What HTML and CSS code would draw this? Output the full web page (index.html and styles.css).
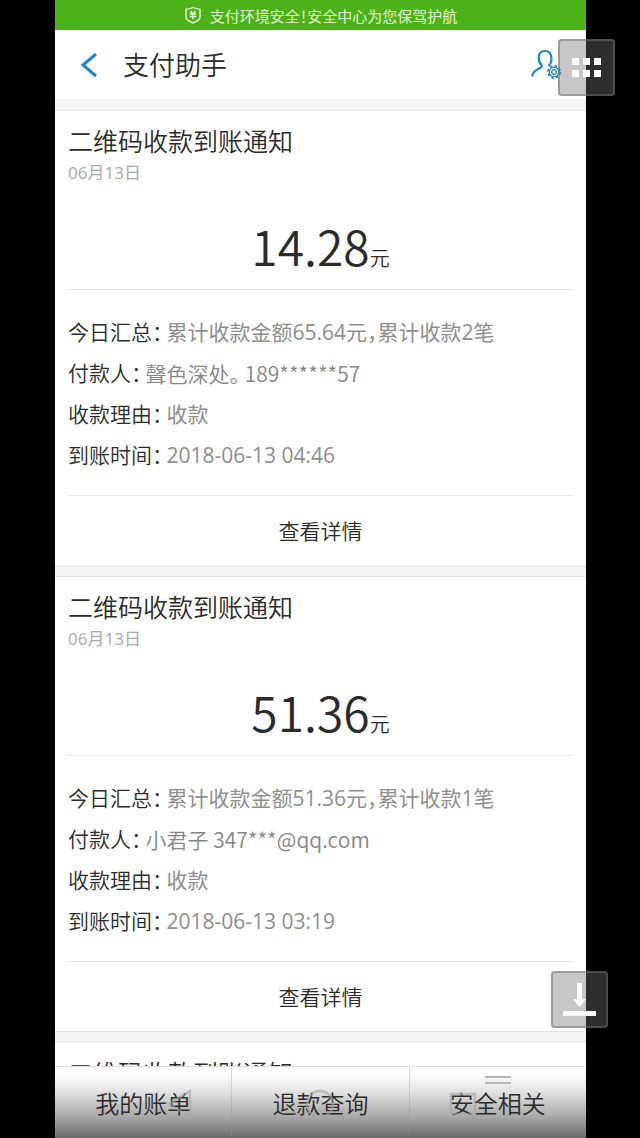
FILE: index.html
```
<!DOCTYPE html>
<html lang="zh-CN">

<head>
  <meta charset="utf-8">
  <meta name="viewport" content="width=device-width, initial-scale=1">
  <title>支付助手</title>
  <link rel="stylesheet" href="styles.css">
</head>

<body>
  <div class="phone">
    <div class="safe-bar">
      <svg class="shield" viewBox="0 0 18 18" aria-hidden="true">
        <path d="M9 1.2 L11 2.4 L16 3.4 V10.5 Q16 13.6 13 15 L9 17 L5 15 Q2 13.6 2 10.5 V3.4 L7 2.4 Z" />
        <path d="M6.500 5.200 L9 8 L11.500 5.200 M5.800 8 H12.200 M5.800 10.500 H12.200 M9 8 V13.300" />
      </svg>
      <span>支付环境安全！安全中心为您保驾护航</span>
    </div>

    <header class="top">
      <button class="icon-btn" type="button" aria-label="返回">
        <svg class="back" viewBox="0 0 18 26" aria-hidden="true">
          <path d="M16 2 L3 13 L16 24" />
        </svg>
      </button>
      <h1>支付助手</h1>
      <button class="icon-btn" type="button" aria-label="账户设置">
        <svg class="user" viewBox="0 0 32 32" aria-hidden="true">
          <path class="person" d="M18.500 17 C21 14.500 21.800 11 21.300 8 C20.800 4 18.500 2 15 2 C11.500 2 9 4 8.700 8 C8.500 11.500 9.500 14 11.500 16.300 C12.500 17.800 11 18.500 8.500 19.700 C4.500 21.500 2.500 23.500 2.300 27.500" />
          <circle class="gear" cx="24" cy="23" r="4.800" />
          <circle class="teeth" cx="24" cy="23" r="6" />
          <circle class="gear" cx="24" cy="23" r="2.300" />
        </svg>
      </button>
    </header>

    <main>
      <article class="card">
        <h2>二维码收款到账通知</h2>
        <p class="date">06月13日</p>
        <p class="amount">14.28<span class="unit">元</span></p>
        <dl>
          <div class="row"><dt>今日汇总：</dt><dd>累计收款金额65.64元，累计收款2笔</dd></div>
          <div class="row"><dt>付款人：</dt><dd class="payer">聲色深处。 189******57</dd></div>
          <div class="row"><dt>收款理由：</dt><dd>收款</dd></div>
          <div class="row"><dt>到账时间：</dt><dd>2018-06-13 04:46</dd></div>
        </dl>
        <a class="detail" href="#">查看详情</a>
      </article>

      <article class="card">
        <h2>二维码收款到账通知</h2>
        <p class="date">06月13日</p>
        <p class="amount">51.36<span class="unit">元</span></p>
        <dl>
          <div class="row"><dt>今日汇总：</dt><dd>累计收款金额51.36元，累计收款1笔</dd></div>
          <div class="row"><dt>付款人：</dt><dd class="payer">小君子 347***@qq.com</dd></div>
          <div class="row"><dt>收款理由：</dt><dd>收款</dd></div>
          <div class="row"><dt>到账时间：</dt><dd>2018-06-13 03:19</dd></div>
        </dl>
        <a class="detail" href="#">查看详情</a>
      </article>

      <article class="card">
        <h2>二维码收款到账通知</h2>
      </article>
    </main>

    <nav class="tabs">
      <button type="button">我的账单
        <svg class="key key-back" viewBox="0 0 30 32" aria-hidden="true"><path d="M25 3 V29 L4 16 Z" /></svg>
      </button>
      <button type="button">退款查询
        <svg class="key key-home" viewBox="0 0 30 32" aria-hidden="true"><circle cx="15" cy="16" r="13" /></svg>
      </button>
      <button type="button">安全相关
        <svg class="key key-recent" viewBox="0 0 30 32" aria-hidden="true"><path d="M3 6 H27 V26 H3 Z" /></svg>
        <span class="handle"></span>
      </button>
    </nav>
  </div>

  <button class="float float-menu" type="button" aria-label="菜单">
    <svg viewBox="0 0 57 57" aria-hidden="true">
      <path d="M14 19h7v7h-7z M25 19h7v7h-7z M36 19h7v7h-7z M14 31h7v7h-7z M25 31h7v7h-7z M36 31h7v7h-7z" />
    </svg>
  </button>
  <button class="float float-save" type="button" aria-label="下载">
    <svg viewBox="0 0 57 57" aria-hidden="true">
      <path d="M26 12h5v16h4l-6.500 8l-6.500 -8h4z M12 40h33v5h-33z" />
    </svg>
  </button>
</body>

</html>
```
FILE: styles.css
```
* {
  box-sizing: border-box;
}

body {
  font-family: "Open Sans", "Noto Sans CJK SC", sans-serif;
  font-weight: 350;
  margin: 0;
  background-color: #000;
  color: #2b2b2b;
  position: relative;
  height: 100vh;
  overflow: hidden;
}

h1, h2, p, dl, dd {
  margin: 0;
  font-weight: inherit;
}

button {
  font: inherit;
  color: inherit;
  border: 0;
  padding: 0;
  background: none;
}

.phone {
  display: flex;
  flex-direction: column;
  height: 100%;
  margin: 0 54px 0 55px;
  background-color: #f4f4f4;
}

/* green notice on top */
.safe-bar {
  display: flex;
  flex: none;
  align-items: center;
  justify-content: center;
  gap: 8px;
  height: 30px;
  background-color: #4db11a;
  color: #e4f6d6;
  font-size: 15px;
  font-weight: 400;
  font-feature-settings: "halt";
}

.shield {
  width: 18px;
  height: 18px;
  fill: none;
  stroke: #e4f6d6;
  stroke-width: 1.4;
}

.top {
  display: flex;
  flex: none;
  align-items: center;
  height: 70px;
  padding: 0 24px;
  background-color: #fff;
  border-bottom: 1px solid #efefef;
}

.top h1 {
  flex: 1;
  margin-left: 24px;
  font-size: 26px;
  line-height: 38px;
}

.icon-btn {
  display: flex;
}

.icon-btn svg {
  fill: none;
  stroke: #1c86c8;
}

.back {
  width: 20px;
  height: 26px;
  stroke-width: 3;
}

.user {
  width: 32px;
  height: 32px;
}

.person {
  stroke-width: 2.2;
}

.gear {
  stroke-width: 1.3;
}

.teeth {
  stroke-width: 2;
  stroke-dasharray: 2.4 2.312;
}

/* message list */
main {
  flex: 1;
  min-height: 0;
  overflow: hidden;
  padding-top: 10px;
}

.card {
  margin-bottom: 10px;
  padding: 12px 13px 0;
  background-color: #fff;
  border-top: 1px solid #e6e6e6;
  border-bottom: 1px solid #e6e6e6;
}

.card h2 {
  font-size: 25px;
  line-height: 36px;
}

.date {
  font-size: 17px;
  font-weight: 400;
  line-height: 28px;
  color: #a9a9a9;
}

.amount {
  height: 103px;
  font-family: "Noto Sans CJK SC", sans-serif;
  font-size: 48px;
  line-height: 116px;
  text-align: center;
  border-bottom: 1px solid #e8e8e8;
}

.unit {
  font-size: 20px;
}

dl {
  padding: 22px 0 19px;
}

.row {
  display: flex;
  gap: 4px;
  font-size: 21px;
  line-height: 41px;
  font-feature-settings: "halt";
}

dd {
  font-weight: 400;
  color: #8e8e8e;
}

.payer {
  font-family: "Noto Sans CJK SC", sans-serif;
  font-weight: 350;
  color: #858585;
}

.detail {
  display: block;
  font-size: 21px;
  line-height: 70px;
  text-align: center;
  color: inherit;
  text-decoration: none;
  height: 70px;
  border-top: 1px solid #e8e8e8;
}

/* bottom menu with the system keys showing through */
.tabs {
  display: flex;
  flex: none;
  height: 72px;
  border-top: 1px solid #dcdcdc;
  background: linear-gradient(#fff 8%, #e2e2e2 35%, #a8a8a8 70%, #696969);
}

.tabs button {
  position: relative;
  flex: 1;
  font-size: 24px;
}

.tabs button + button {
  border-left: 1px solid rgba(150, 150, 150, 0.35);
}

.key {
  position: absolute;
  top: 21px;
  width: 30px;
  height: 32px;
  fill: none;
  stroke: rgba(165, 165, 165, 0.6);
  stroke-width: 2.5;
}

.key-back {
  right: 36px;
}

.key-home {
  left: 73px;
}

.key-recent {
  left: 38px;
}

.handle {
  position: absolute;
  top: 9px;
  left: 50%;
  width: 26px;
  height: 8px;
  margin-left: -13px;
  border-top: 2px solid #b5b5b5;
  border-bottom: 2px solid #b5b5b5;
}

.float {
  position: absolute;
  width: 57px;
  height: 57px;
  background-color: rgba(115, 115, 115, 0.4);
  box-shadow: inset 0 0 0 2px rgba(110, 110, 110, 0.5);
  border-radius: 4px;
}

.float svg {
  display: block;
  fill: #fff;
}

.float-menu {
  top: 39px;
  right: 25px;
}

.float-save {
  right: 32px;
  bottom: 110px;
}
```
